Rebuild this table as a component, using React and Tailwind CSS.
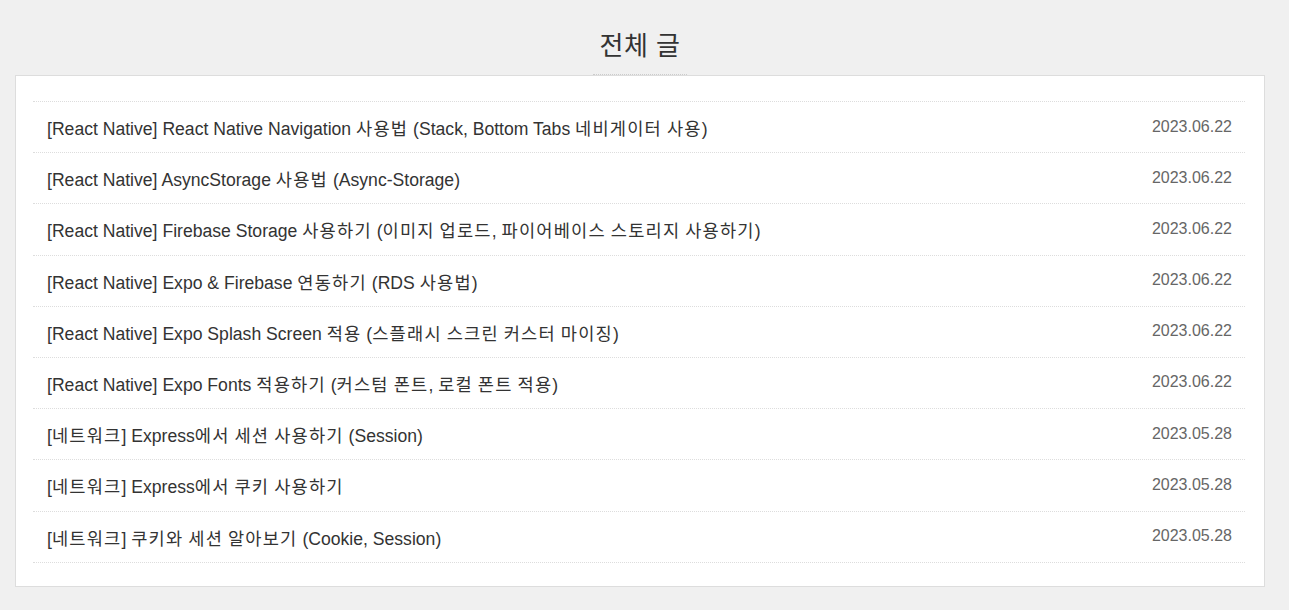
const posts = [
  ["[React Native] React Native Navigation 사용법 (Stack, Bottom Tabs 네비게이터 사용)", "2023.06.22"],
  ["[React Native] AsyncStorage 사용법 (Async-Storage)", "2023.06.22"],
  ["[React Native] Firebase Storage 사용하기 (이미지 업로드, 파이어베이스 스토리지 사용하기)", "2023.06.22"],
  ["[React Native] Expo & Firebase 연동하기 (RDS 사용법)", "2023.06.22"],
  ["[React Native] Expo Splash Screen 적용 (스플래시 스크린 커스터 마이징)", "2023.06.22"],
  ["[React Native] Expo Fonts 적용하기 (커스텀 폰트, 로컬 폰트 적용)", "2023.06.22"],
  ["[네트워크] Express에서 세션 사용하기 (Session)", "2023.05.28"],
  ["[네트워크] Express에서 쿠키 사용하기", "2023.05.28"],
  ["[네트워크] 쿠키와 세션 알아보기 (Cookie, Session)", "2023.05.28"],
];

function Mixed({ text }) {
  const parts = text.split(/([\uAC00-\uD7A3]+)/);
  return parts.map((p, i) =>
    /[\uAC00-\uD7A3]/.test(p) ? (
      <span key={i} className="tracking-[1.2px]">{p}</span>
    ) : (
      <span key={i}>{p}</span>
    )
  );
}

export default function App() {
  return (
    <div
      className="min-h-[610px] w-full bg-[#f0f0f0] px-[15px] pt-[27px]"
      style={{ fontFamily: '"Liberation Sans", "Noto Sans CJK KR", sans-serif' }}
    >
      <div className="flex w-[1250px] justify-center">
        <h2 className="mt-[1px] border-b border-dotted border-[#cccccc] px-[7px] pb-[10px] text-[26px] leading-[36px] font-normal text-[#333333] tracking-[0.5px]">
          전체 글
        </h2>
      </div>
      <div className="w-[1250px] h-[512px] border border-[#dddddd] bg-white pl-[17px] pr-[19px] pt-[25px]">
        <ul className="border-b border-dotted border-[#dddddd]">
          {posts.map(([title, date], i) => (
            <li
              key={i}
              className="flex h-[51.2px] items-start justify-between border-t border-dotted border-[#dddddd] pl-[14px] pr-[13px]"
            >
              <span className="mt-[16px] text-[17.6px] leading-[22px] text-[#333333]">
                <Mixed text={title} />
              </span>
              <span className="mt-[14.5px] text-[16px] leading-[20px] text-[#666666]">{date}</span>
            </li>
          ))}
        </ul>
      </div>
    </div>
  );
}
